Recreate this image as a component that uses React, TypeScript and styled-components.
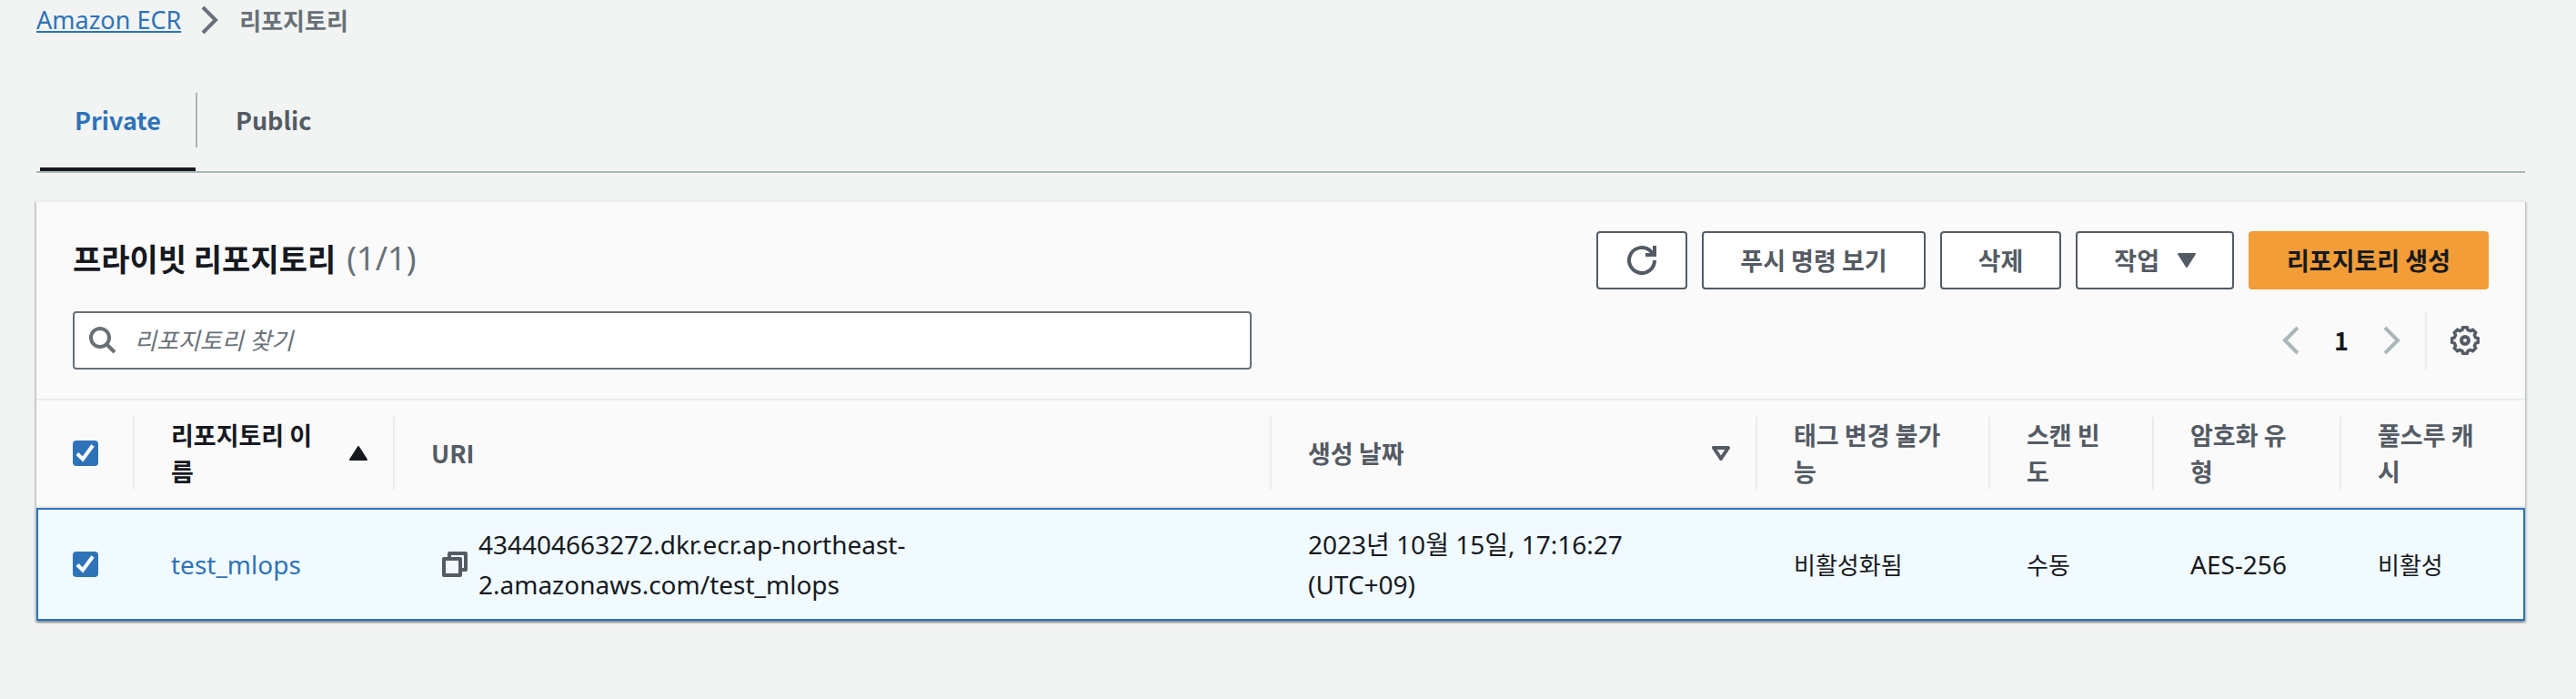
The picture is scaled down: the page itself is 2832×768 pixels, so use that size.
import React from 'react';
import styled, { createGlobalStyle, css } from 'styled-components';

const color = {
  page: '#f2f4f3',
  surface: '#fafafa',
  line: '#eaecec',
  rule: '#aab7b8',
  text: '#16191f',
  muted: '#545b64',
  soft: '#687078',
  blue: '#2e73b8',
  selected: '#f1fafe',
  orange: '#f29d38',
};

const GlobalStyle = createGlobalStyle`
  *, *::before, *::after { box-sizing: border-box; }
  body {
    margin: 0;
    background: ${color.page};
    color: ${color.text};
    font-family: "Noto Sans", "Noto Sans CJK KR", sans-serif;
    font-size: 28px;
    line-height: 44px;
  }
  button, input { font: inherit; color: inherit; }
`;

const boldFont = css`
  font-family: "Noto Sans CJK KR", sans-serif;
  font-size: 27px;
  font-weight: 700;
`;

const Page = styled.main`
  padding: 0 56px 86px 40px;
`;

const Breadcrumbs = styled.nav`
  display: flex;
  align-items: center;
  gap: 22px;
  height: 44px;
`;

const CrumbLink = styled.a`
  color: ${color.blue};
  font-size: 27px;
  text-decoration: underline;
  text-decoration-thickness: 2px;
  text-underline-offset: 2px;
`;

const CrumbCurrent = styled.span`
  ${boldFont}
  font-size: 26px;
  color: ${color.soft};
`;

const Icon = styled.svg<{ $size?: number }>`
  display: block;
  flex: none;
  width: ${(p) => p.$size ?? 32}px;
  height: ${(p) => p.$size ?? 32}px;
  fill: none;
  stroke: currentColor;
  stroke-width: 2;
`;

const Triangle = styled.svg`
  display: block;
  flex: none;
  width: 20px;
  height: 16px;
  stroke: currentColor;
  stroke-linejoin: round;
`;

const Tabs = styled.div`
  display: flex;
  margin-top: 58px;
  border-bottom: 2px solid ${color.rule};
`;

const Tab = styled.button<{ $active?: boolean }>`
  ${boldFont}
  display: flex;
  flex-direction: column;
  gap: 22px;
  padding: 0;
  border: 0;
  background: none;
  color: ${(p) => (p.$active ? color.blue : color.muted)};
  cursor: pointer;

  &::after {
    content: '';
    align-self: stretch;
    height: 4px;
    margin: 0 2px 0 4px;
    background: ${(p) => (p.$active ? color.text : 'transparent')};
  }
`;

const TabLabel = styled.span`
  padding: 8px 38px 8px 42px;
  border-right: 2px solid transparent;

  ${Tab}:not(:last-child) & {
    border-right-color: ${color.rule};
  }
`;

const Card = styled.section`
  margin-top: 30px;
  border-top: 2px solid ${color.line};
  background: ${color.surface};
  box-shadow:
    0 2px 2px 0 rgba(0, 28, 36, 0.3),
    2px 2px 2px 0 rgba(0, 28, 36, 0.15),
    -2px 2px 2px 0 rgba(0, 28, 36, 0.15);
`;

const CardHeader = styled.header`
  display: flex;
  flex-direction: column;
  gap: 24px;
  padding: 32px 40px;
`;

const Bar = styled.div`
  display: flex;
  align-items: flex-start;
  justify-content: space-between;
`;

const Title = styled.h2`
  display: flex;
  align-items: center;
  gap: 12px;
  margin: 0;
  font-family: "Noto Sans CJK KR", sans-serif;
  font-size: 34px;
  font-weight: 700;
  line-height: 60px;
`;

const Count = styled.span`
  font-family: "Noto Sans", sans-serif;
  font-size: 36px;
  font-weight: 400;
  color: ${color.soft};
`;

const Actions = styled.div`
  display: flex;
  gap: 16px;
`;

const Button = styled.button<{ $primary?: boolean; $iconOnly?: boolean }>`
  ${boldFont}
  display: flex;
  align-items: center;
  gap: 20px;
  height: 64px;
  padding: 0 ${(p) => (p.$iconOnly ? 32 : 40)}px;
  border: 2px solid ${(p) => (p.$primary ? color.orange : color.muted)};
  border-radius: 4px;
  background: ${(p) => (p.$primary ? color.orange : '#fff')};
  color: ${(p) => (p.$primary ? color.text : color.muted)};
  white-space: nowrap;
  cursor: pointer;
`;

const SearchBox = styled.label`
  display: flex;
  align-items: center;
  gap: 18px;
  width: 100%;
  max-width: 1296px;
  height: 64px;
  padding: 0 16px;
  border: 2px solid ${color.soft};
  border-radius: 4px;
  background: #fff;
  color: ${color.soft};
`;

const SearchInput = styled.input`
  flex: 1;
  min-width: 0;
  padding: 0;
  border: 0;
  outline: 0;
  background: none;
  font-size: 26px;
  color: ${color.text};

  &::placeholder {
    color: ${color.soft};
    font-style: italic;
    opacity: 1;
  }
`;

const Pager = styled.div`
  display: flex;
  align-items: center;
  height: 64px;
`;

const PagerList = styled.div`
  display: flex;
  align-items: center;
  gap: 32px;
  padding-right: 20px;
`;

const PlainButton = styled.button<{ $dim?: boolean }>`
  display: flex;
  padding: 0;
  border: 0;
  background: none;
  color: ${(p) => (p.$dim ? color.rule : color.muted)};
  cursor: pointer;
`;

const PageNumber = styled.button`
  ${boldFont}
  padding: 0;
  border: 0;
  background: none;
  color: ${color.text};
`;

const Preferences = styled.div`
  display: flex;
  align-items: center;
  height: 64px;
  padding: 0 10px 0 26px;
  border-left: 2px solid ${color.line};
`;

const Table = styled.table`
  width: 100%;
  table-layout: fixed;
  border-collapse: separate;
  border-spacing: 0;
`;

const Col = styled.col<{ $width?: number }>`
  width: ${(p) => (p.$width ? `${p.$width}px` : 'auto')};
`;

const HeadCell = styled.th<{ $sorted?: boolean }>`
  ${boldFont}
  line-height: 40px;
  padding: 18px 0;
  border-top: 2px solid ${color.line};
  border-bottom: 2px solid ${color.line};
  color: ${(p) => (p.$sorted ? color.text : color.muted)};
  text-align: left;
`;

const HeadContent = styled.div<{ $sortable?: boolean }>`
  display: flex;
  align-items: center;
  justify-content: space-between;
  gap: 20px;
  height: 80px;
  padding: 0 ${(p) => (p.$sortable ? 28 : 38)}px 0 40px;
  border-right: 2px solid ${color.line};

  ${HeadCell}:last-child & {
    border-right-color: transparent;
  }
`;

const Cell = styled.td`
  height: 124px;
  padding: 16px 40px;
  border: 0 solid ${color.blue};
  border-width: 2px 0;
  background: ${color.selected};

  &:first-child { border-left-width: 2px; padding-left: 38px; }
  &:last-child { border-right-width: 2px; }
`;

const KoreanText = styled.span`
  font-size: 26px;
`;

const RepoLink = styled.a`
  color: ${color.blue};
  text-decoration: none;
`;

const UriContent = styled.div`
  display: flex;
  align-items: center;
  gap: 12px;
  padding-left: 12px;
`;

const Checkbox = styled.input`
  appearance: none;
  display: block;
  width: 28px;
  height: 28px;
  margin: 0;
  border-radius: 4px;
  background: ${color.blue};
`;

const CheckWrap = styled.label`
  display: grid;
  width: 28px;
  height: 28px;

  & > * { grid-area: 1 / 1; }
`;

const CheckMark = styled(Icon)`
  stroke: #fff;
  stroke-width: 4;
  pointer-events: none;
`;

function Check({ label }: { label: string }) {
  return (
    <CheckWrap>
      <Checkbox type="checkbox" defaultChecked aria-label={label} />
      <CheckMark $size={28} viewBox="0 0 28 28" aria-hidden>
        <path d="M5 14.5 L11 20.5 L22 5.5" />
      </CheckMark>
    </CheckWrap>
  );
}

function Chevron({ left }: { left?: boolean }) {
  return (
    <Icon viewBox="0 0 16 16" aria-hidden>
      <path d={left ? 'M12 1 L5 8 L12 15' : 'M4 1 L11 8 L4 15'} />
    </Icon>
  );
}

const CrumbChevron = styled.svg`
  display: block;
  width: 20px;
  height: 32px;
  fill: none;
  stroke: ${color.soft};
  stroke-width: 4;
`;

// Eight teeth: two outer points and two valley points for each 45° step.
const gearOutline = Array.from({ length: 8 }, (_, i) =>
  [[-9, 14.5], [9, 14.5], [15, 12], [30, 12]].map(([offset, radius]) => {
    const a = ((i * 45 + offset - 90) * Math.PI) / 180;
    return `${(16 + radius * Math.cos(a)).toFixed(2)},${(16 + radius * Math.sin(a)).toFixed(2)}`;
  }).join(' '),
).join(' ');

function Gear() {
  return (
    <Icon viewBox="0 0 32 32" aria-hidden>
      <polygon points={gearOutline} strokeWidth="3.4" />
      <circle cx="16" cy="16" r="4" strokeWidth="4" />
    </Icon>
  );
}

const columns: { label: string; width?: number; sort?: 'asc' | 'none' }[] = [
  { label: '리포지토리 이름', width: 286, sort: 'asc' },
  { label: 'URI' },
  { label: '생성 날짜', width: 534, sort: 'none' },
  { label: '태그 변경 불가능', width: 256 },
  { label: '스캔 빈도', width: 180 },
  { label: '암호화 유형', width: 206 },
  { label: '풀스루 캐시', width: 202 },
];

export default function App() {
  return (
    <Page>
      <GlobalStyle />
      <Breadcrumbs aria-label="breadcrumb">
        <CrumbLink href="#ecr">Amazon ECR</CrumbLink>
        <CrumbChevron viewBox="0 0 20 32" aria-hidden>
          <path d="M2 2 L16 16 L2 30" />
        </CrumbChevron>
        <CrumbCurrent>리포지토리</CrumbCurrent>
      </Breadcrumbs>

      <Tabs role="tablist">
        <Tab role="tab" aria-selected $active><TabLabel>Private</TabLabel></Tab>
        <Tab role="tab" aria-selected={false}><TabLabel>Public</TabLabel></Tab>
      </Tabs>

      <Card>
        <CardHeader>
          <Bar>
            <Title>프라이빗 리포지토리 <Count>(1/1)</Count></Title>
            <Actions>
              <Button $iconOnly aria-label="새로 고침">
                <Icon viewBox="0 0 32 32" aria-hidden>
                  <path d="M30 16 A14 14 0 1 1 25.9 6.1 L29 9.5" strokeWidth="4" />
                  <path d="M30 0 V10 H20" strokeWidth="4" />
                </Icon>
              </Button>
              <Button>푸시 명령 보기</Button>
              <Button>삭제</Button>
              <Button>
                작업
                <Triangle viewBox="0 0 20 16" fill="currentColor" strokeWidth="2" aria-hidden>
                  <path d="M1 1 H19 L10 15 Z" />
                </Triangle>
              </Button>
              <Button $primary>리포지토리 생성</Button>
            </Actions>
          </Bar>
          <Bar>
            <SearchBox>
              <Icon viewBox="0 0 32 32" aria-hidden>
                <circle cx="12" cy="13" r="10" strokeWidth="4" />
                <path d="M18.5 19.5 L28 29" strokeWidth="4" />
              </Icon>
              <SearchInput type="text" placeholder="리포지토리 찾기" aria-label="리포지토리 찾기" />
            </SearchBox>
            <Pager>
              <PagerList>
                <PlainButton $dim aria-label="이전 페이지"><Chevron left /></PlainButton>
                <PageNumber>1</PageNumber>
                <PlainButton $dim aria-label="다음 페이지"><Chevron /></PlainButton>
              </PagerList>
              <Preferences>
                <PlainButton aria-label="기본 설정"><Gear /></PlainButton>
              </Preferences>
            </Pager>
          </Bar>
        </CardHeader>

        <Table>
          <colgroup>
            <Col $width={108} />
            {columns.map((c) => <Col key={c.label} $width={c.width} />)}
          </colgroup>
          <thead>
            <tr>
              <HeadCell>
                <HeadContent><Check label="모두 선택" /></HeadContent>
              </HeadCell>
              {columns.map((c) => (
                <HeadCell key={c.label} $sorted={c.sort === 'asc'}>
                  <HeadContent $sortable={Boolean(c.sort)}>
                    <span>{c.label}</span>
                    {c.sort === 'asc' && (
                      <Triangle viewBox="0 0 20 16" fill="currentColor" strokeWidth="2" aria-hidden>
                        <path d="M1 15 H19 L10 1 Z" />
                      </Triangle>
                    )}
                    {c.sort === 'none' && (
                      <Triangle viewBox="0 0 20 16" fill="none" strokeWidth="4" aria-hidden>
                        <path d="M2 2 H18 L10 14 Z" />
                      </Triangle>
                    )}
                  </HeadContent>
                </HeadCell>
              ))}
            </tr>
          </thead>
          <tbody>
            <tr>
              <Cell><Check label="test_mlops 선택" /></Cell>
              <Cell><RepoLink href="#test_mlops">test_mlops</RepoLink></Cell>
              <Cell>
                <UriContent>
                  <PlainButton aria-label="URI 복사">
                    <Icon $size={28} viewBox="0 0 28 28" aria-hidden>
                      <path d="M8 6 V2 H26 V20 H22" strokeWidth="4" strokeLinejoin="round" />
                      <rect x="2" y="8" width="18" height="18" strokeWidth="4" strokeLinejoin="round" />
                    </Icon>
                  </PlainButton>
                  <span>434404663272.dkr.ecr.ap-northeast-2.amazonaws.com/test_mlops</span>
                </UriContent>
              </Cell>
              <Cell>2023년 10월 15일, 17:16:27 (UTC+09)</Cell>
              <Cell><KoreanText>비활성화됨</KoreanText></Cell>
              <Cell><KoreanText>수동</KoreanText></Cell>
              <Cell>AES-256</Cell>
              <Cell><KoreanText>비활성</KoreanText></Cell>
            </tr>
          </tbody>
        </Table>
      </Card>
    </Page>
  );
}
